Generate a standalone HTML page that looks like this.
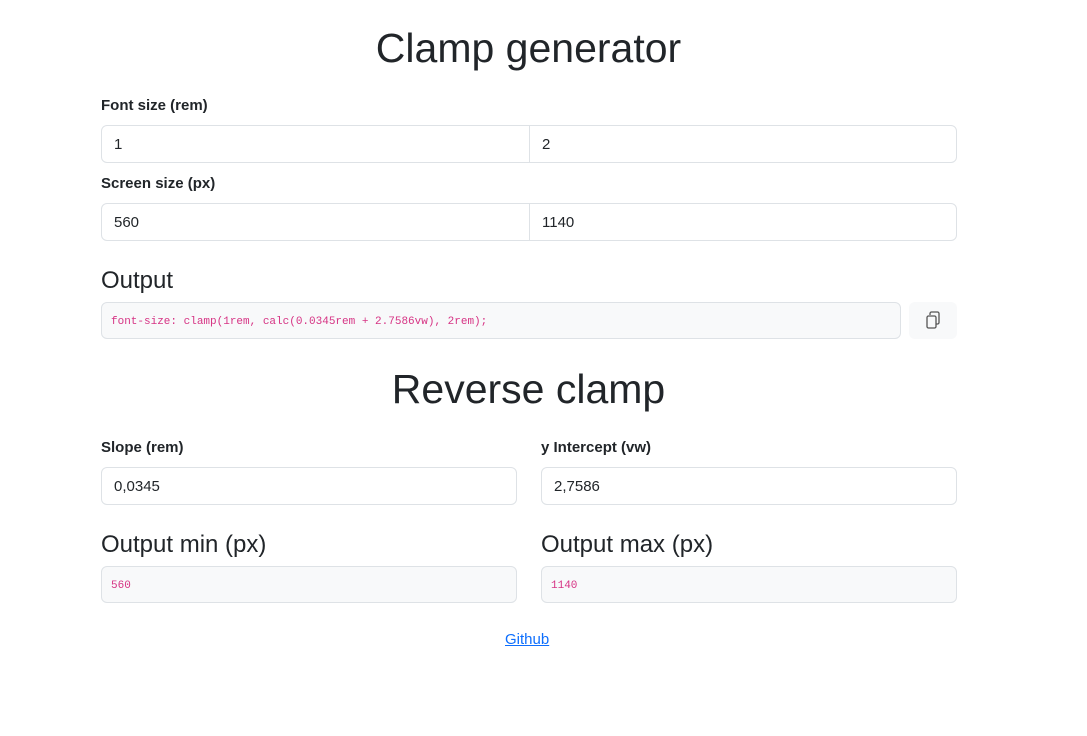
<!DOCTYPE html>
<html><head><style>
body{margin:0;font-family:"Liberation Sans",sans-serif;color:#212529;background:#fff;width:1087px;height:736px;position:relative}
.a{position:absolute}
h1{position:absolute;margin:0;font-weight:500;font-size:41px;width:1087px;left:-15px;text-align:center;line-height:48px}
.lab{position:absolute;font-weight:bold;font-size:15px;line-height:18px}
.inp{position:absolute;box-sizing:border-box;border:1px solid #dee2e6;border-radius:6px;height:38px;font-size:15px;line-height:38px;padding-left:12px;background:#fff}
.h3{position:absolute;font-size:24px;line-height:28px;font-weight:500}
.code{position:absolute;box-sizing:border-box;border:1px solid #dee2e6;border-radius:6px;height:37px;background:#f8f9fa;color:#d63384;font-family:"Liberation Mono",monospace;font-size:11px;line-height:38px;padding-left:9px}
</style></head><body>
<h1 style="top:24px">Clamp generator</h1>
<div class="lab" style="left:101px;top:97px">Font size (rem)</div>
<div class="inp" style="left:101px;top:125px;width:429px;border-radius:6px 0 0 6px">1</div>
<div class="inp" style="left:529px;top:125px;width:428px;border-radius:0 6px 6px 0">2</div>
<div class="lab" style="left:101px;top:175px">Screen size (px)</div>
<div class="inp" style="left:101px;top:203px;width:429px;border-radius:6px 0 0 6px">560</div>
<div class="inp" style="left:529px;top:203px;width:428px;border-radius:0 6px 6px 0">1140</div>
<div class="h3" style="left:101px;top:267px">Output</div>
<div class="code" style="left:101px;top:302px;width:800px">font-size: clamp(1rem, calc(0.0345rem + 2.7586vw), 2rem);</div>
<div class="a" style="left:909px;top:302px;width:48px;height:37px;background:#f8f9fa;border-radius:6px">
<svg width="48" height="37" viewBox="0 0 48 37"><rect x="18" y="14" width="9" height="12" rx="1.5" fill="none" stroke="#555" stroke-width="1.3"/><path d="M21 13v-1.5a1.5 1.5 0 0 1 1.5-1.5h6a1.5 1.5 0 0 1 1.5 1.5v9a1.5 1.5 0 0 1-1.5 1.5H27" fill="none" stroke="#555" stroke-width="1.3"/></svg></div>
<h1 style="top:365px">Reverse clamp</h1>
<div class="lab" style="left:101px;top:439px">Slope (rem)</div>
<div class="lab" style="left:541px;top:439px">y Intercept (vw)</div>
<div class="inp" style="left:101px;top:467px;width:416px">0,0345</div>
<div class="inp" style="left:541px;top:467px;width:416px">2,7586</div>
<div class="h3" style="left:101px;top:531px">Output min (px)</div>
<div class="h3" style="left:541px;top:531px">Output max (px)</div>
<div class="code" style="left:101px;top:566px;width:416px">560</div>
<div class="code" style="left:541px;top:566px;width:416px">1140</div>
<a class="a" style="left:505px;top:631px;color:#0d6efd;font-size:15px;line-height:18px;text-decoration:underline">Github</a>
</body></html>
